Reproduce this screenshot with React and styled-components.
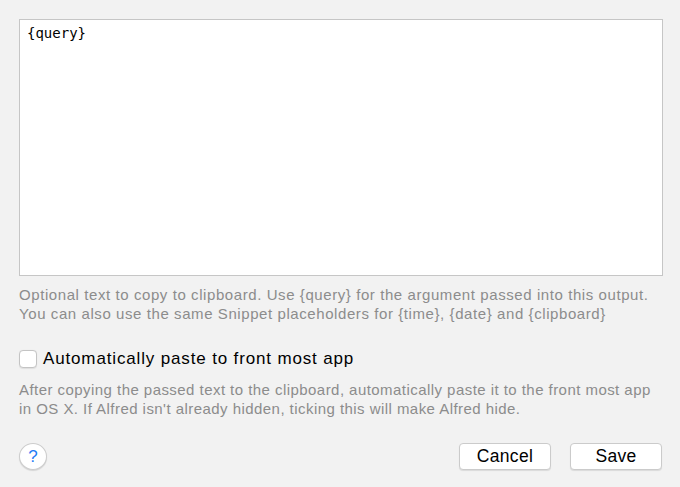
import React, { useState } from "react";
import styled, { createGlobalStyle } from "styled-components";

const GlobalStyle = createGlobalStyle`
  html, body {
    margin: 0;
    padding: 0;
    background: #f2f2f2;
  }
  * { box-sizing: border-box; }
`;

const Panel = styled.div`
  width: 680px;
  height: 487px;
  padding: 19px 18px 17px 19px;
  display: flex;
  flex-direction: column;
  font-family: "Liberation Sans", Arial, sans-serif;
  background: #f2f2f2;
  color: #000;
`;

const Editor = styled.textarea`
  display: block;
  width: 644px;
  height: 257px;
  margin: 0;
  padding: 4px 7px;
  border: 1px solid #c6c6c6;
  border-radius: 0;
  background: #fff;
  resize: none;
  outline: none;
  font-family: "DejaVu Sans Mono", "Liberation Mono", monospace;
  font-size: 14px;
  line-height: 18px;
  color: #000;
`;

const Hint = styled.p`
  margin: ${(p) => p.$top}px 0 0 0;
  font-size: 15px;
  letter-spacing: ${(p) => p.$ls}px;
  line-height: ${(p) => p.$lh}px;
  color: #8c8c8c;
  white-space: nowrap;
`;

const CheckRow = styled.label`
  display: flex;
  align-items: center;
  gap: 6px;
  margin-top: 27px;
  height: 18px;
  font-size: 17px;
  letter-spacing: 0.85px;
  color: #000;
  cursor: default;
`;

const Box = styled.span`
  width: 18px;
  height: 18px;
  border: 1px solid #c4c4c4;
  border-radius: 4px;
  background: #fff;
  box-shadow: 0 0.5px 1px rgba(0, 0, 0, 0.08);
  display: flex;
  align-items: center;
  justify-content: center;
  flex: none;
`;

const Footer = styled.div`
  margin-top: auto;
  display: flex;
  align-items: center;
  gap: 19px;
`;

const HelpButton = styled.button`
  width: 28px;
  height: 27px;
  border-radius: 50%;
  border: 1px solid #cdcdcd;
  background: #fff;
  box-shadow: 0 1px 1px rgba(0, 0, 0, 0.12);
  color: #1f7cf5;
  font-family: "Liberation Sans", Arial, sans-serif;
  font-size: 17px;
  padding: 0;
  margin-right: auto;
  display: flex;
  align-items: center;
  justify-content: center;
`;

const Button = styled.button`
  width: 92px;
  height: 27px;
  border: 1px solid #cbcbcb;
  border-radius: 4px;
  background: #fff;
  box-shadow: 0 1px 1px rgba(0, 0, 0, 0.1);
  font-family: "Liberation Sans", Arial, sans-serif;
  font-size: 17.5px;
  letter-spacing: 0.3px;
  color: #000;
  padding: 0;
`;

export default function App() {
  const [text, setText] = useState("{query}");
  const [checked, setChecked] = useState(false);

  return (
    <>
      <GlobalStyle />
      <Panel>
        <Editor value={text} onChange={(e) => setText(e.target.value)} spellCheck={false} />
        <Hint $top={9} $lh={19} $ls={0.58}>
          Optional text to copy to clipboard. Use {"{query}"} for the argument passed into this output.
          <br />
          You can also use the same Snippet placeholders for {"{time}"}, {"{date}"} and {"{clipboard}"}
        </Hint>
        <CheckRow onClick={() => setChecked(!checked)}>
          <Box>
            {checked && (
              <svg width="12" height="12" viewBox="0 0 12 12">
                <path d="M2 6.5l2.5 2.5L10 3" fill="none" stroke="#000" strokeWidth="1.8" />
              </svg>
            )}
          </Box>
          Automatically paste to front most app
        </CheckRow>
        <Hint $top={13} $lh={18.5} $ls={0.45}>
          After copying the passed text to the clipboard, automatically paste it to the front most app
          <br />
          in OS X. If Alfred isn't already hidden, ticking this will make Alfred hide.
        </Hint>
        <Footer>
          <HelpButton>?</HelpButton>
          <Button>Cancel</Button>
          <Button>Save</Button>
        </Footer>
      </Panel>
    </>
  );
}
